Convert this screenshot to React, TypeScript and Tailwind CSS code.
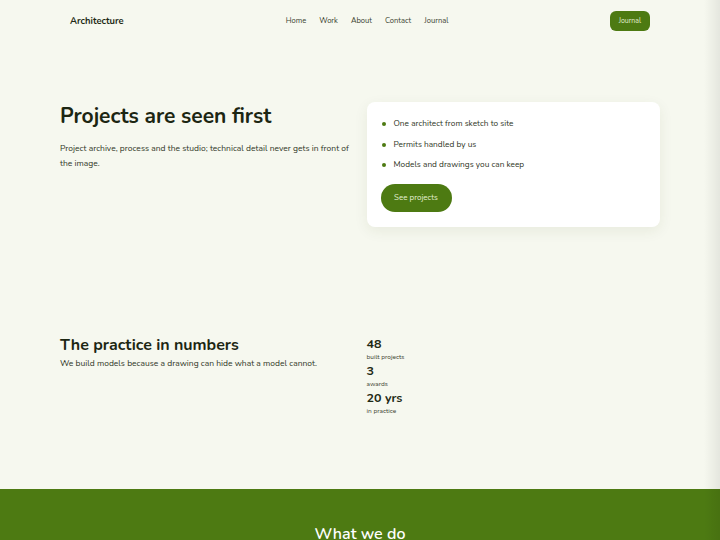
import React from "react";

export default function App() {
  const font = { fontFamily: '"Nunito", "Open Sans", "Noto Sans", sans-serif' };
  return (
    <div className="relative min-h-[540px] w-full overflow-hidden bg-[#f6f8ef] text-[#1f2a15]" style={font}>
      <div className="mx-auto w-[600px]">
        <header className="flex h-[42px] items-center justify-between px-[10px]">
          <div className="text-[9.4px] font-bold text-[#1f2a15]">Architecture</div>
          <nav className="ml-[162px] flex items-center gap-[13px] text-[7.6px] text-[#3b4230]">
            <span>Home</span>
            <span>Work</span>
            <span>About</span>
            <span>Contact</span>
            <span>Journal</span>
          </nav>
          <div className="ml-auto flex h-[20px] items-center rounded-[6px] bg-[#4d7a12] px-[9px] text-[7px] text-[#e4f0d2]">Journal</div>
        </header>

        <section className="mt-[60px] grid grid-cols-2 gap-[13px]">
          <div className="pt-[1px]">
            <h1 className="text-[21px] font-bold leading-[26px] text-[#1c2612]">Projects are seen first</h1>
            <p className="mt-[12px] text-[8.5px] leading-[15px] text-[#2f3626]">
              Project archive, process and the studio; technical detail never gets in front of the image.
            </p>
          </div>
          <div className="rounded-[8px] bg-white px-[14px] pt-[16px] pb-[15px] shadow-[0_4px_14px_rgba(60,80,20,0.08)]">
            <ul className="flex flex-col gap-[8px] text-[8.3px] text-[#2f3626]">
              {["One architect from sketch to site", "Permits handled by us", "Models and drawings you can keep"].map((t) => (
                <li key={t} className="flex h-[12.5px] items-center">
                  <span className="ml-[1px] mr-[8px] h-[4px] w-[4px] rounded-full bg-[#4d7a12]" />
                  <span>{t}</span>
                </li>
              ))}
            </ul>
            <div className="mt-[12px] flex h-[28px] w-[71px] items-center justify-center rounded-full bg-[#4d7a12] text-[8px] text-[#e4f0d2]">
              See projects
            </div>
          </div>
        </section>

        <section className="mt-[109px] grid grid-cols-2 gap-[13px]">
          <div>
            <h2 className="text-[16px] font-bold leading-[18px] text-[#1c2612]">The practice in numbers</h2>
            <p className="mt-[3px] text-[8.5px] leading-[12px] text-[#2f3626]">
              We build models because a drawing can hide what a model cannot.
            </p>
          </div>
          <div className="flex flex-col">
            <div className="text-[12.5px] font-bold leading-[15px]">48</div>
            <div className="text-[6.5px] leading-[12px] text-[#3b4230]">built projects</div>
            <div className="text-[12.5px] font-bold leading-[15px]">3</div>
            <div className="text-[6.5px] leading-[12px] text-[#3b4230]">awards</div>
            <div className="text-[12.5px] font-bold leading-[15px]">20 yrs</div>
            <div className="text-[6.5px] leading-[12px] text-[#3b4230]">in practice</div>
          </div>
        </section>
      </div>

      <section className="mt-[72px] h-[200px] bg-[#4d7a12] pt-[33px] text-center">
        <h2 className="text-[16px] font-semibold leading-[24px] text-white">What we do</h2>
      </section>

      <div className="pointer-events-none absolute right-0 top-0 h-full w-[16px] bg-gradient-to-r from-transparent to-[rgba(0,0,0,0.07)]" />
    </div>
  );
}
